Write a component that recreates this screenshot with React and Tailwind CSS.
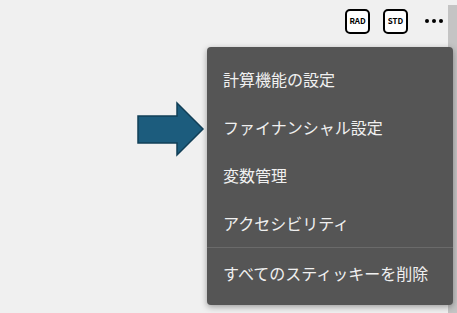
import React from 'react';

const items = ['計算機能の設定', 'ファイナンシャル設定', '変数管理', 'アクセシビリティ'];

const ModeButton = ({ label }) => (
  <div className="flex h-[25px] w-[25px] items-center justify-center rounded-[5px] border-2 border-black bg-white text-[8px] font-bold text-black">
    {label}
  </div>
);

export default function App() {
  return (
    <div
      className="relative h-[313px] w-[457px] overflow-hidden bg-[#f0f0f0]"
      style={{ fontFamily: '"Noto Sans CJK JP", "Noto Sans", sans-serif' }}
    >
      {/* right side strip */}
      <div className="absolute right-0 top-[5px] bottom-0 w-[9px] bg-[#c4c4c4]" />

      <div className="flex h-[41px] items-center justify-end gap-[13px] pr-[14px] pt-[1px]">
        <ModeButton label="RAD" />
        <ModeButton label="STD" />
        <div className="ml-[4px] flex items-center gap-[3px]">
          <span className="h-[4px] w-[4px] rounded-full bg-black" />
          <span className="h-[4px] w-[4px] rounded-full bg-black" />
          <span className="h-[4px] w-[4px] rounded-full bg-black" />
        </div>
      </div>

      <div className="absolute left-[207px] top-[47px] w-[246px] rounded-[4px] bg-[#555555] py-[8px] shadow-[0_2px_6px_rgba(0,0,0,0.35)]">
        {items.map((t) => (
          <div key={t} className="flex h-[48px] items-center pl-[16px] text-[16px] text-[#f0f0f0]">
            {t}
          </div>
        ))}
        <div className="h-px bg-[#6a6a6a]" />
        <div className="flex h-[49px] items-center pl-[16px] text-[16px] text-[#f0f0f0]">
          すべてのスティッキーを削除
        </div>
      </div>

      <svg className="absolute left-[136px] top-[101px]" width="70" height="57" viewBox="0 0 70 57">
        <polygon
          points="2,15 41,15 41,2 67,28 41,54 41,42 2,42"
          fill="#1c5c7d"
          stroke="#113f57"
          strokeWidth="1.5"
          strokeLinejoin="miter"
        />
      </svg>
    </div>
  );
}
